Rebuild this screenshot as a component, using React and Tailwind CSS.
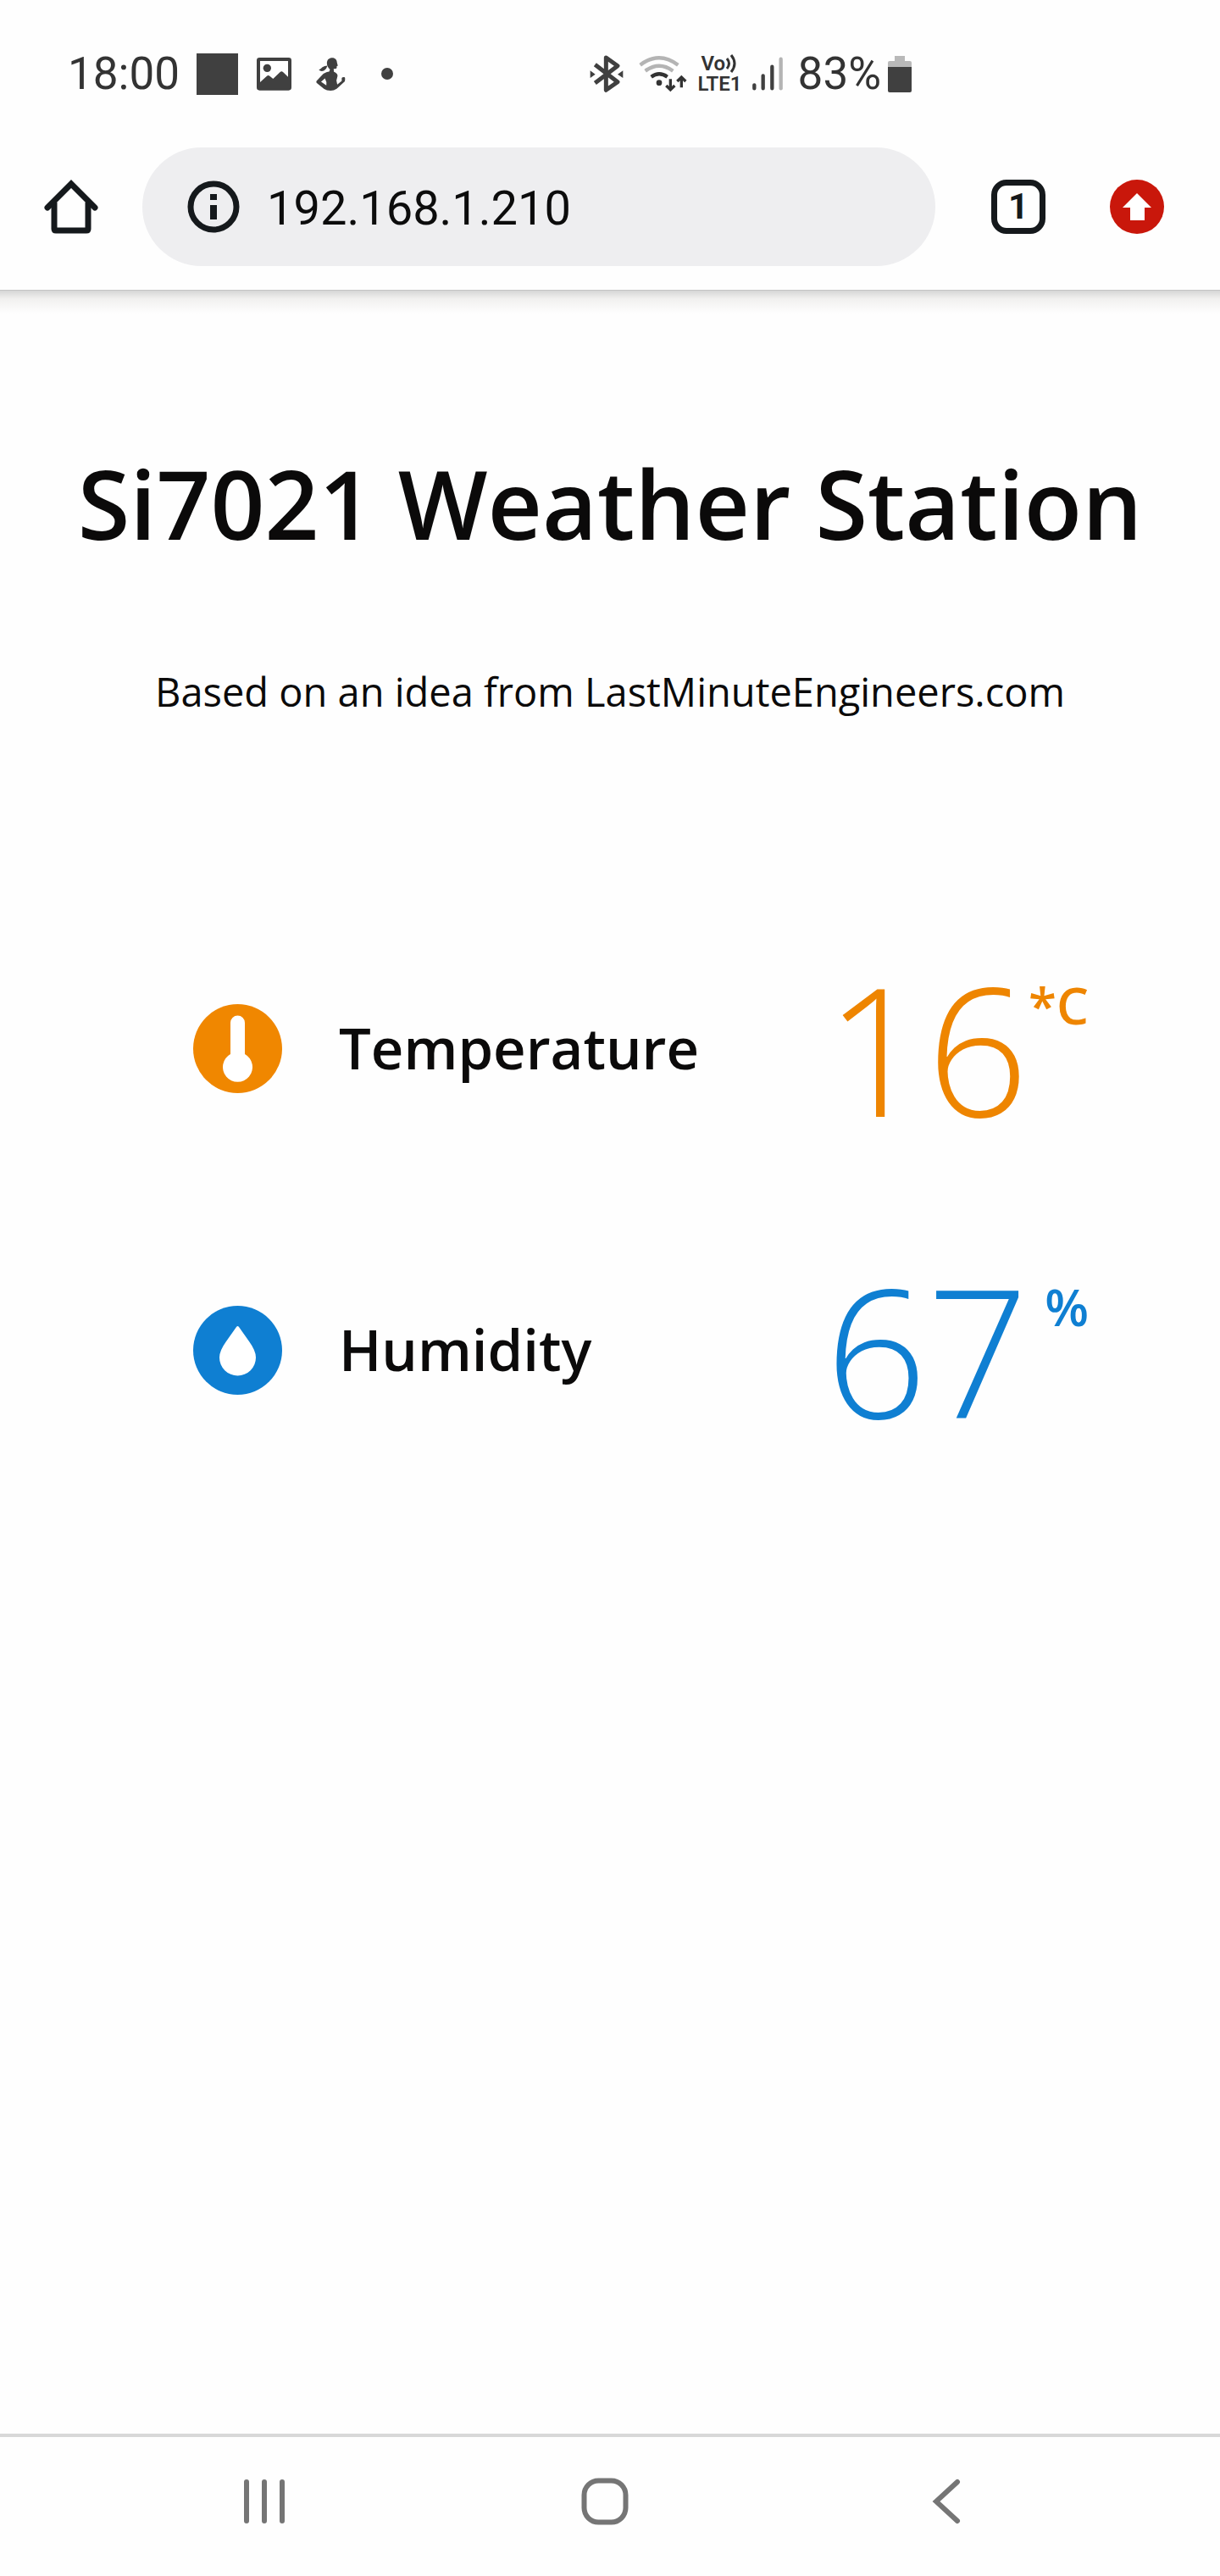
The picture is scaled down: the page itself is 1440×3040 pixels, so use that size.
function PictureIcon() {
  return (
    <svg viewBox="0 0 123 117" className="h-[39px] w-[41px]" aria-hidden="true">
      <path
        fillRule="evenodd"
        fill="#404040"
        d="M10 0H113Q123 0 123 10V106Q123 116 113 116H10Q0 116 0 106V10Q0 0 10 0ZM12 12V87L36 65Q41 61 46 65L58 75L83 51Q88 47 93 51L111 68V12Z"
      />
      <circle cx="37" cy="37" r="14" fill="#404040" />
    </svg>
  );
}

function FitnessIcon() {
  return (
    <svg viewBox="940 80 106 118" className="h-[39px] w-[35px]" aria-hidden="true">
      <g fill="#404040" fillRule="evenodd">
        <path d="M979 97C981 85 989 81 998 81C1009 81 1015 89 1015 98L1018 109L1014 111V117Q1013 121 1003 120L1004 131Q1018 137 1017 146L1013 162L1016 176L1032 163L1032 153Q1034 149 1043 150Q1045 153 1043 165L1014 191Q1004 198 992 198Q978 198 969 192L942 170Q940 166 942 163L962 142Q970 133 987 130L990 122Q978 112 979 97ZM972 154L958 166L977 179Q979 166 972 154Z" />
        <path d="M981 109Q978 121 969 126Q958 131 950 124Q958 120 963 114Q970 109 981 109Z" />
      </g>
    </svg>
  );
}

function BluetoothIcon() {
  return (
    <svg viewBox="56 70 120 132" className="h-[44px] w-[40px]" aria-hidden="true">
      <path
        d="M75 104L155 165L114 194V79L155 108L75 169"
        fill="none"
        stroke="#404040"
        strokeWidth="15"
        strokeLinejoin="round"
      />
      <path d="M58 125L76 138L58 151ZM174 125L155 138L174 151Z" fill="#404040" />
    </svg>
  );
}

function WifiIcon() {
  return (
    <svg viewBox="232 70 171 132" className="h-[44px] w-[57px]" aria-hidden="true">
      <g fill="none" strokeWidth="13">
        <path d="M237 105Q304 54 371 105" stroke="#b4b4b4" />
        <path d="M255 126Q304 90 353 126" stroke="#b4b4b4" />
        <path d="M276 147Q304 127 333 147" stroke="#333" />
        <path d="M344 155V193M329 178L344 193L359 178M383 185V148M368 163L383 148L398 163" stroke="#333" strokeWidth="10" />
      </g>
      <circle cx="304" cy="168" r="10" fill="#333" />
    </svg>
  );
}

function VoWaves() {
  return (
    <svg viewBox="0 0 14 22" className="h-[22px] w-[14px]" aria-hidden="true">
      <path d="M2 5Q7 11 2 17M7 1Q15 11 7 21" fill="none" stroke="#333" strokeWidth="3" />
    </svg>
  );
}

function SignalIcon() {
  return (
    <svg viewBox="0 0 108 120" className="h-[40px] w-[36px]" aria-hidden="true">
      <g strokeWidth="13" strokeLinecap="round">
        <path d="M7 100V112M38 67V112M70 35V112" stroke="#404040" />
        <path d="M101 8V112" stroke="#b4b4b4" />
      </g>
    </svg>
  );
}

function BatteryIcon() {
  return (
    <svg viewBox="0 0 28 43" className="h-[43px] w-[28px]" aria-hidden="true">
      <path d="M8 0H20V6H26Q28 6 28 8V13H0V8Q0 6 2 6H8Z" fill="#b9b9b9" />
      <path d="M0 13H28V41Q28 43 26 43H2Q0 43 0 41Z" fill="#404040" />
    </svg>
  );
}

function StatusBar() {
  return (
    <div className="flex h-[174px] items-center justify-between pl-20 pr-[364px] text-[53px] leading-none text-[#333]">
      <div className="flex items-center">
        <span>18:00</span>
        <span className="ml-5 size-[49px] bg-[#404040]" />
        <span className="ml-[22px]"><PictureIcon /></span>
        <span className="ml-[29px]"><FitnessIcon /></span>
        <span className="ml-[42px] size-[14px] rounded-full bg-[#404040]" />
      </div>
      <div className="flex items-center">
        <BluetoothIcon />
        <span className="ml-[18px]"><WifiIcon /></span>
        <div className="ml-3 flex flex-col text-[24px] leading-6 font-semibold">
          <div className="flex items-center pl-1">
            <span>Vo</span>
            <VoWaves />
          </div>
          <span>LTE1</span>
        </div>
        <span className="ml-3"><SignalIcon /></span>
        <span className="ml-[18px]">83%</span>
        <span className="ml-2"><BatteryIcon /></span>
      </div>
    </div>
  );
}

function BrowserBar() {
  return (
    <div className="flex items-center pl-[52px] pr-[66px] pb-7">
      <button type="button" aria-label="Home" className="shrink-0">
        <svg viewBox="0 0 64 64" className="size-16" fill="none" stroke="#15191c" strokeWidth="7" aria-hidden="true">
          <path d="M4 33L32 5L60 33" strokeLinecap="round" />
          <path d="M12 27V58Q12 60 14 60H50Q52 60 52 58V27" />
        </svg>
      </button>
      <div className="ml-[52px] flex h-[140px] min-w-0 flex-1 items-center rounded-full bg-[#eeeef0] pl-[53px] pr-12">
        <svg viewBox="0 0 62 62" className="size-[62px] shrink-0" aria-hidden="true">
          <circle cx="31" cy="31" r="27" fill="none" stroke="#15191c" strokeWidth="7" />
          <path d="M27 16H35V23H27ZM27 29H35V46H27Z" fill="#15191c" />
        </svg>
        <input
          type="text"
          aria-label="Address"
          defaultValue="192.168.1.210"
          className="ml-8 min-w-0 flex-1 bg-transparent pt-1 text-[56px] leading-[72px] text-[#0c0c0c] outline-none"
        />
      </div>
      <button
        type="button"
        aria-label="Open tabs"
        className="ml-[66px] flex size-16 shrink-0 items-center justify-center rounded-[18px] border-[7px] border-[#15191c] text-[42px] leading-none font-bold text-[#15191c]"
      >
        1
      </button>
      <button type="button" aria-label="Update available" className="ml-[76px] shrink-0">
        <svg viewBox="0 0 64 64" className="size-16" aria-hidden="true">
          <circle cx="32" cy="32" r="32" fill="#c9170b" />
          <path d="M32 16L49 33H41V48H24V33H15Z" fill="#fff" />
        </svg>
      </button>
    </div>
  );
}

function ThermometerIcon() {
  return (
    <svg viewBox="0 0 105 105" className="size-[105px] shrink-0" aria-hidden="true">
      <circle cx="52.5" cy="52.5" r="52.5" fill="#f08700" />
      <path d="M44 22A8.5 8.5 0 0 1 61 22V59A17.5 17.5 0 1 1 44 59Z" fill="#fff" />
    </svg>
  );
}

function DropIcon() {
  return (
    <svg viewBox="0 0 105 105" className="size-[105px] shrink-0" aria-hidden="true">
      <circle cx="52.5" cy="52.5" r="52.5" fill="#0f7fd2" />
      <path d="M51 25Q52.5 23 54 25L66 42Q74 53 74 61A21.5 21.5 0 0 1 31 61Q31 53 39 42Z" fill="#fff" />
    </svg>
  );
}

function Reading({ icon, label, value, unit, color }) {
  return (
    <div className="flex items-center py-[73px]">
      {icon}
      <h2 className="ml-[67px] pb-0.5 text-[67px] leading-[80px] font-semibold">{label}</h2>
      <div className={`ml-auto flex items-start ${color}`}>
        <span className="text-[210px] leading-[210px] font-light">{value}</span>
        <span className="w-[71px] pt-6 text-right text-[60px] leading-[60px] font-semibold">{unit}</span>
      </div>
    </div>
  );
}

function NavigationBar() {
  return (
    <nav className="flex items-center justify-between border-t-4 border-[#d8d8d8] pt-12 pb-[60px] pl-[284px] pr-[306px]">
      <button type="button" aria-label="Recent apps">
        <svg viewBox="0 0 56 56" className="size-14" stroke="#757575" strokeWidth="6" strokeLinecap="round" aria-hidden="true">
          <path d="M7 5V51M28 5V51M49 5V51" />
        </svg>
      </button>
      <button type="button" aria-label="Home screen">
        <svg viewBox="0 0 56 56" className="size-14" fill="none" stroke="#757575" strokeWidth="6" aria-hidden="true">
          <rect x="3.5" y="3.5" width="49" height="49" rx="17" />
        </svg>
      </button>
      <button type="button" aria-label="Back" className="pl-3">
        <svg viewBox="0 0 34 56" className="h-14 w-[34px]" fill="none" stroke="#757575" strokeWidth="6" strokeLinecap="round" aria-hidden="true">
          <path d="M30 5L5 28L30 51" />
        </svg>
      </button>
    </nav>
  );
}

export default function App() {
  return (
    <div className="flex min-h-screen flex-col bg-[#fefefe] font-['Roboto',sans-serif]">
      <header>
        <StatusBar />
        <BrowserBar />
        <div className="h-7 border-t border-[#c4c4c4] bg-linear-to-b from-[#d6d6d6] via-[#f1f0ef] via-35% to-[#fefefe]" />
      </header>
      <main className="flex-1 pt-[168px] font-['Open_Sans',sans-serif] text-[#0b0a0a]">
        <h1 className="text-center text-[112px] leading-[112px] font-semibold">Si7021 Weather Station</h1>
        <p className="mt-[134px] text-center text-[47px] leading-[64px]">
          Based on an idea from LastMinuteEngineers.com
        </p>
        <section className="mt-[211px] pl-[228px] pr-[155px]">
          <Reading icon={<ThermometerIcon />} label="Temperature" value="16" unit="*C" color="text-[#ee8500]" />
          <Reading icon={<DropIcon />} label="Humidity" value="67" unit="%" color="text-[#0f7fd2]" />
        </section>
      </main>
      <NavigationBar />
    </div>
  );
}
